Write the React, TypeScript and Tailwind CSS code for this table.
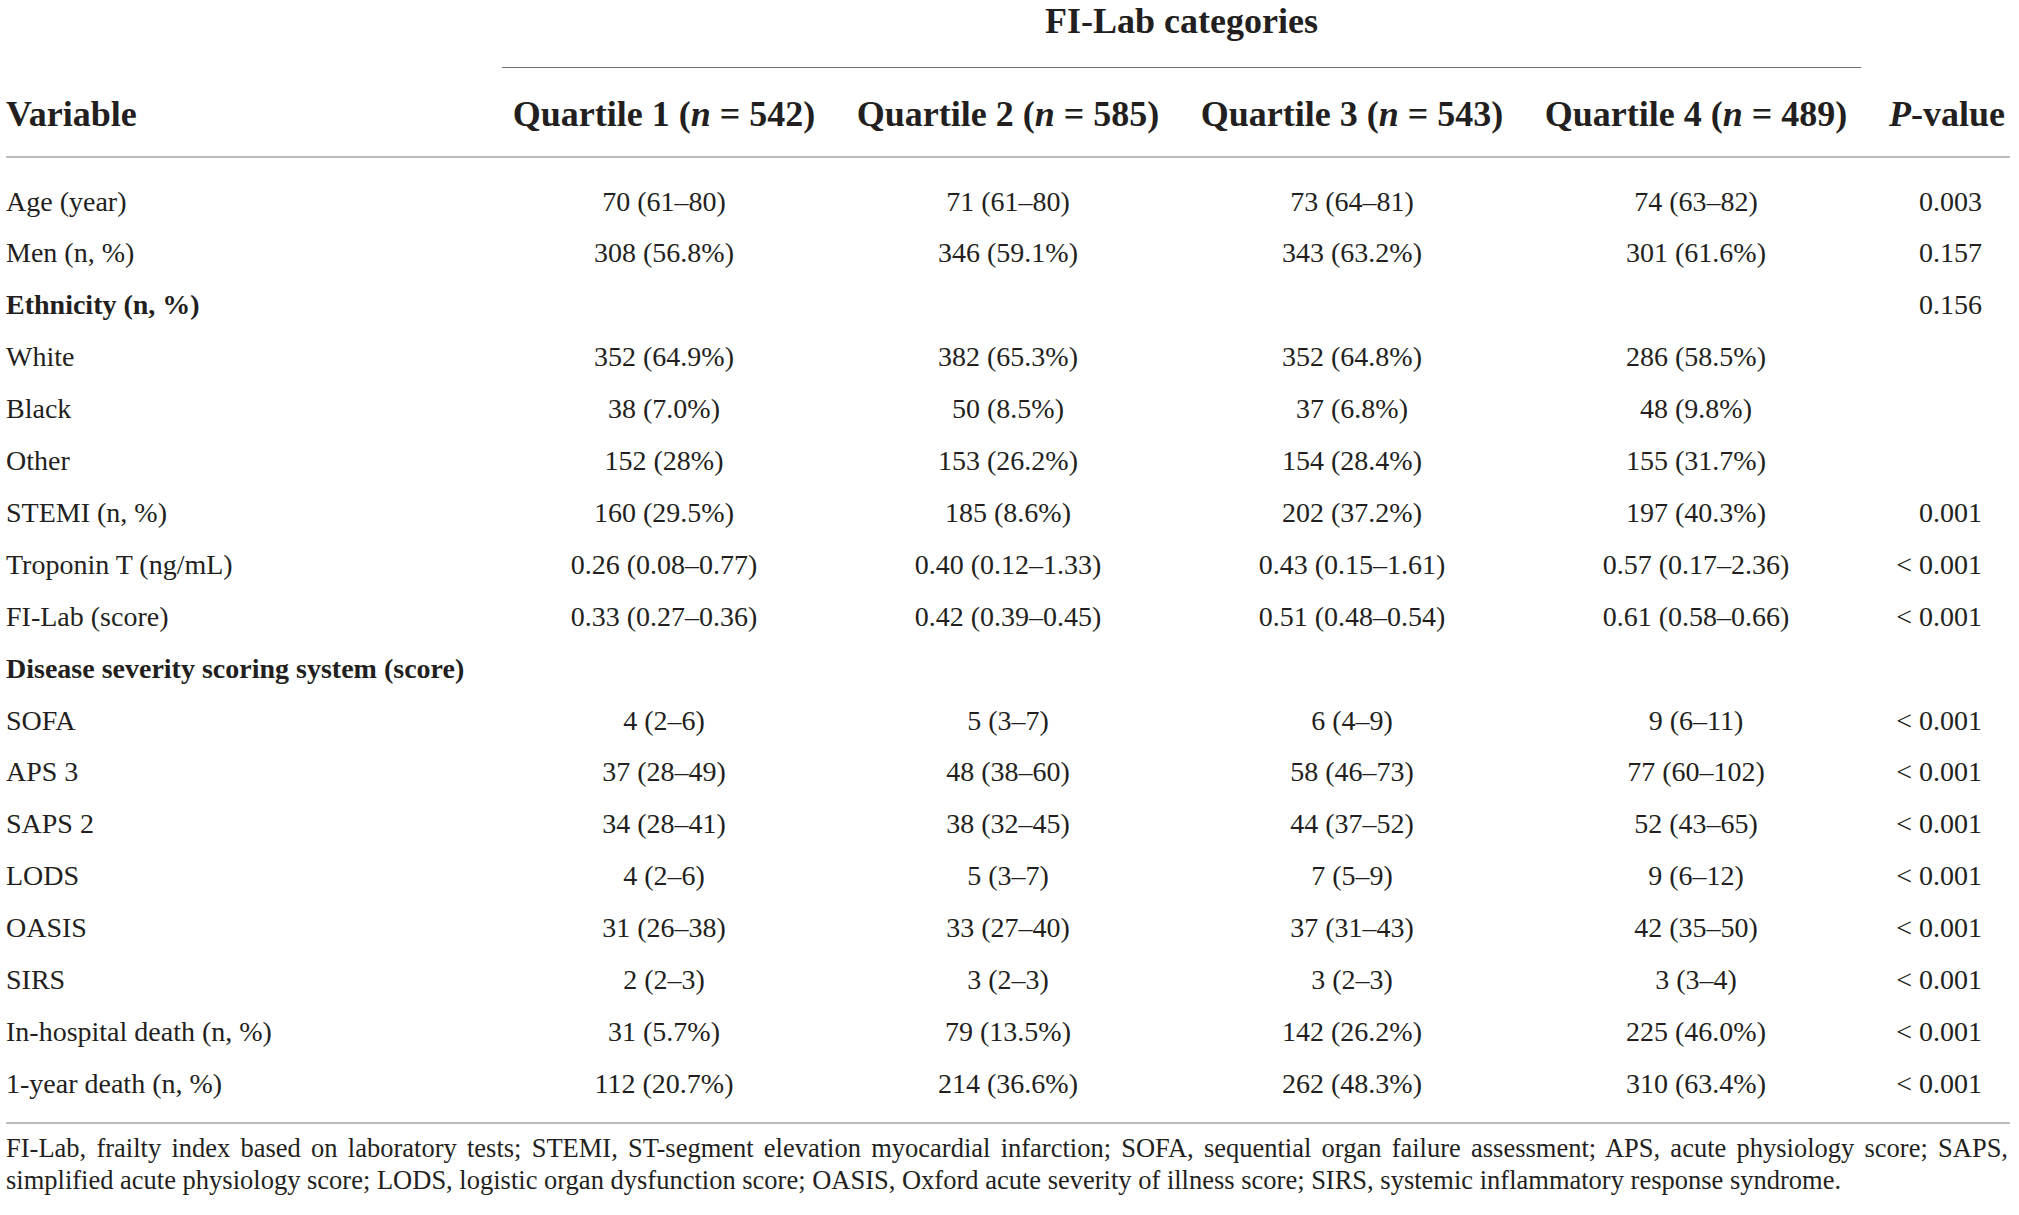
import React from "react";

type Row = {
  label: string;
  bold?: boolean;
  values?: string[];
  p?: string;
};

const rows: Row[] = [
  { label: "Age (year)", values: ["70 (61–80)", "71 (61–80)", "73 (64–81)", "74 (63–82)"], p: "0.003" },
  { label: "Men (n, %)", values: ["308 (56.8%)", "346 (59.1%)", "343 (63.2%)", "301 (61.6%)"], p: "0.157" },
  { label: "Ethnicity (n, %)", bold: true, p: "0.156" },
  { label: "White", values: ["352 (64.9%)", "382 (65.3%)", "352 (64.8%)", "286 (58.5%)"] },
  { label: "Black", values: ["38 (7.0%)", "50 (8.5%)", "37 (6.8%)", "48 (9.8%)"] },
  { label: "Other", values: ["152 (28%)", "153 (26.2%)", "154 (28.4%)", "155 (31.7%)"] },
  { label: "STEMI (n, %)", values: ["160 (29.5%)", "185 (8.6%)", "202 (37.2%)", "197 (40.3%)"], p: "0.001" },
  { label: "Troponin T (ng/mL)", values: ["0.26 (0.08–0.77)", "0.40 (0.12–1.33)", "0.43 (0.15–1.61)", "0.57 (0.17–2.36)"], p: "< 0.001" },
  { label: "FI-Lab (score)", values: ["0.33 (0.27–0.36)", "0.42 (0.39–0.45)", "0.51 (0.48–0.54)", "0.61 (0.58–0.66)"], p: "< 0.001" },
  { label: "Disease severity scoring system (score)", bold: true },
  { label: "SOFA", values: ["4 (2–6)", "5 (3–7)", "6 (4–9)", "9 (6–11)"], p: "< 0.001" },
  { label: "APS 3", values: ["37 (28–49)", "48 (38–60)", "58 (46–73)", "77 (60–102)"], p: "< 0.001" },
  { label: "SAPS 2", values: ["34 (28–41)", "38 (32–45)", "44 (37–52)", "52 (43–65)"], p: "< 0.001" },
  { label: "LODS", values: ["4 (2–6)", "5 (3–7)", "7 (5–9)", "9 (6–12)"], p: "< 0.001" },
  { label: "OASIS", values: ["31 (26–38)", "33 (27–40)", "37 (31–43)", "42 (35–50)"], p: "< 0.001" },
  { label: "SIRS", values: ["2 (2–3)", "3 (2–3)", "3 (2–3)", "3 (3–4)"], p: "< 0.001" },
  { label: "In-hospital death (n, %)", values: ["31 (5.7%)", "79 (13.5%)", "142 (26.2%)", "225 (46.0%)"], p: "< 0.001" },
  { label: "1-year death (n, %)", values: ["112 (20.7%)", "214 (36.6%)", "262 (48.3%)", "310 (63.4%)"], p: "< 0.001" },
];

const quartiles = [
  { q: "1", n: "542" },
  { q: "2", n: "585" },
  { q: "3", n: "543" },
  { q: "4", n: "489" },
];

const cols = "grid grid-cols-[486px_344px_344px_344px_344px_1fr]";

export default function App() {
  return (
    <div className="w-[2019px] h-[1215px] bg-white pl-[6px] font-['Liberation_Serif',serif] text-[#231f20]">
      <div className="w-[2004px]">
        {/* spanner */}
        <div className={cols}>
          <div className="col-start-2 col-span-4 ml-[10px] mr-[7px] h-[68px] border-b border-[#6f6f6f] text-center text-[36px] font-bold leading-[42px]">
            FI-Lab categories
          </div>
        </div>

        {/* header */}
        <div className={`${cols} h-[90px] border-b-2 border-[#bdbdbd] pt-[26px] text-[36px] font-bold leading-[40px]`}>
          <div>Variable</div>
          {quartiles.map((c) => (
            <div key={c.q} className="text-center whitespace-nowrap">
              Quartile {c.q} (<i>n</i> = {c.n})
            </div>
          ))}
          <div className="text-right pr-[5px] whitespace-nowrap">
            <i>P</i>-value
          </div>
        </div>

        {/* body */}
        <div className="pt-[17.6px] pb-[12px] border-b-2 border-[#bdbdbd] text-[28px]">
          {rows.map((r) => (
            <div key={r.label} className={`${cols} h-[51.9px] leading-[51.9px]`}>
              <div className={r.bold ? "font-bold whitespace-nowrap" : "whitespace-nowrap"}>{r.label}</div>
              {[0, 1, 2, 3].map((i) => (
                <div key={i} className="text-center whitespace-nowrap">
                  {r.values ? r.values[i] : ""}
                </div>
              ))}
              <div className="text-right pr-[28px] whitespace-nowrap">{r.p ?? ""}</div>
            </div>
          ))}
        </div>

        {/* footnote */}
        <div className="pt-[8px] pr-[2px] text-[26.5px] leading-[32px]">
          <p className="text-justify [text-align-last:justify] whitespace-nowrap">
            FI-Lab, frailty index based on laboratory tests; STEMI, ST-segment elevation myocardial infarction; SOFA, sequential organ failure assessment; APS, acute physiology score; SAPS,
          </p>
          <p className="whitespace-nowrap">
            simplified acute physiology score; LODS, logistic organ dysfunction score; OASIS, Oxford acute severity of illness score; SIRS, systemic inflammatory response syndrome.
          </p>
        </div>
      </div>
    </div>
  );
}
